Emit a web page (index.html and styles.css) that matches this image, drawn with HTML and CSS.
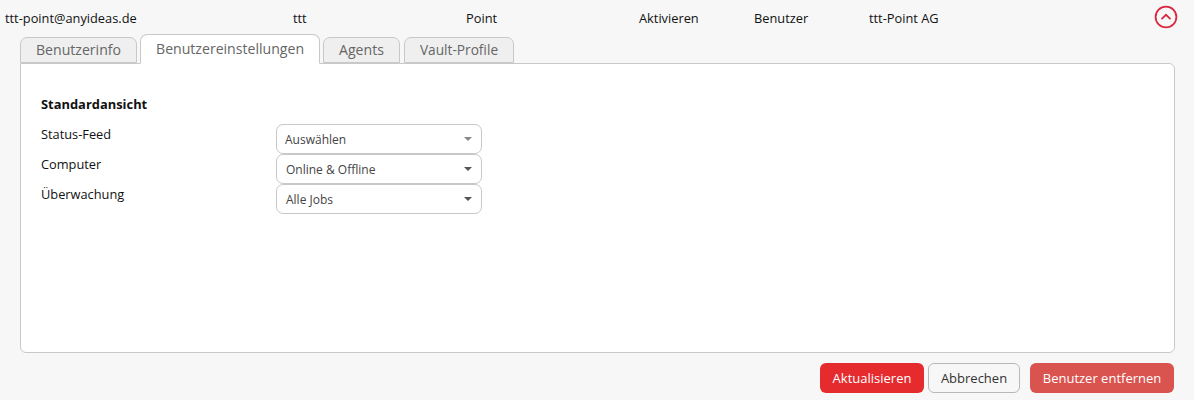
FILE: index.html
```html
<!DOCTYPE html>
<html lang="de">
  <head>
    <meta charset="UTF-8" />
    <title>Benutzer</title>
    <link rel="stylesheet" href="styles.css">
  </head>
  <body>
    <div class="user-row">
      <span>ttt-point@anyideas.de</span>
      <span>ttt</span>
      <span>Point</span>
      <span>Aktivieren</span>
      <span>Benutzer</span>
      <span>ttt-Point AG</span>
      <svg class="collapse" width="24" height="24" viewBox="0 0 24 24">
        <circle cx="12" cy="12" r="10.4" fill="none" stroke="#d9283f" stroke-width="1.8" />
        <path d="M7.5 14.2 L12 9.8 L16.5 14.2" fill="none" stroke="#d9283f" stroke-width="1.8" />
      </svg>
    </div>
    <div class="details">
      <div class="tabs">
        <div class="tab">Benutzerinfo</div>
        <div class="tab active">Benutzereinstellungen</div>
        <div class="tab tab-agents">Agents</div>
        <div class="tab tab-vault">Vault-Profile</div>
      </div>
      <div class="panel">
        <h4>Standardansicht</h4>
        <div class="field">
          <label>Status-Feed</label>
          <div class="select first"><span>Auswählen</span><i class="caret light"></i></div>
        </div>
        <div class="field">
          <label>Computer</label>
          <div class="select"><span>Online &amp; Offline</span><i class="caret"></i></div>
        </div>
        <div class="field">
          <label>Überwachung</label>
          <div class="select"><span>Alle Jobs</span><i class="caret"></i></div>
        </div>
      </div>
      <div class="actions">
        <button class="btn btn-primary">Aktualisieren</button>
        <button class="btn btn-default">Abbrechen</button>
        <button class="btn btn-danger">Benutzer entfernen</button>
      </div>
    </div>
  </body>
</html>
```

FILE: styles.css
```css
body {
  margin: 0;
  height: 400px;
  overflow: hidden;
  background: #f7f7f7;
  color: #111;
  font-family: "Open Sans", sans-serif;
  font-size: 12.8px;
}
.user-row {
  display: grid;
  grid-template-columns: 288px 173px 173px 115px 115px 1fr 24px;
  align-items: center;
  height: 35px;
  padding: 0 16px 0 5px;
}
.collapse {
  display: block;
  margin-top: -2px;
}
.details {
  padding: 0 19px 0 20px;
}
.tabs {
  display: flex;
  align-items: flex-end;
  gap: 3px;
  height: 28px;
  position: relative;
  z-index: 1;
}
.tab {
  box-sizing: border-box;
  height: 26px;
  padding: 0 15px;
  line-height: 24px;
  font-size: 14.1px;
  color: #666;
  background: #efefef;
  border: 1px solid #c8c8c8;
  border-radius: 7px 7px 0 0;
}
.tab-agents {
  margin-right: 1px;
}
.tab-vault {
  font-size: 13.7px;
}
.tab.active {
  height: 30px;
  line-height: 28px;
  background: #fff;
  border-bottom: 1px solid #fff;
  margin-bottom: -1px;
}
.panel {
  box-sizing: border-box;
  height: 290px;
  padding: 31px 20px 0;
  background: #fff;
  border: 1px solid #c8c8c8;
  border-radius: 0 6px 6px 6px;
}
h4 {
  margin: 0 0 10px;
  height: 19px;
  line-height: 19px;
  font-size: 12.9px;
  font-weight: 700;
}
.field {
  display: flex;
  height: 30px;
}
.field label {
  width: 235px;
  line-height: 20px;
}
.select {
  box-sizing: border-box;
  display: flex;
  align-items: center;
  justify-content: space-between;
  width: 206px;
  height: 30px;
  padding: 0 9px;
  background: #fff;
  border: 1px solid #c8c8c8;
  border-radius: 7px;
  color: #444;
  font-size: 12px;
}
.select.first {
  padding-left: 8px;
}
.caret {
  width: 0;
  height: 0;
  border-left: 4px solid transparent;
  border-right: 4px solid transparent;
  border-top: 4px solid #555;
}
.caret.light {
  border-top-color: #888;
}
.actions {
  display: flex;
  justify-content: flex-end;
  gap: 4px;
  margin-top: 10px;
  padding-right: 1px;
}
.btn {
  box-sizing: border-box;
  height: 30px;
  padding: 0;
  white-space: nowrap;
  border-radius: 6px;
  border: 1px solid transparent;
  font-family: inherit;
  font-size: 13px;
}
.btn-primary {
  width: 104px;
  background: #e52b2e;
  color: #fff;
}
.btn-default {
  width: 92px;
  background: #f7f7f7;
  border-color: #b8b8b8;
  color: #333;
}
.btn-danger {
  width: 144px;
  margin-left: 6px;
  background: #d9534f;
  color: #fff;
}
```
